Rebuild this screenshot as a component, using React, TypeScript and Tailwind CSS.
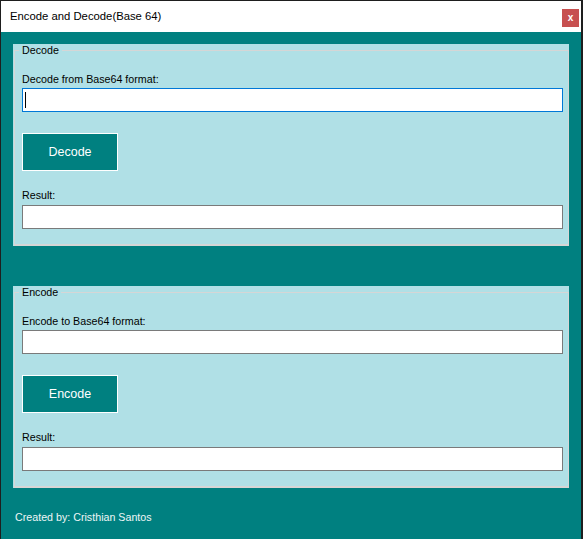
import React from "react";

const font = { fontFamily: '"Liberation Sans", Arial, sans-serif' };

function Field({ focused }: { focused?: boolean }) {
  return (
    <div
      className={
        "h-[24px] w-full bg-white border flex items-center pl-[2px] " +
        (focused ? "border-[#0078d7]" : "border-[#7a7a7a]")
      }
    >
      {focused ? <span className="block w-px h-[16px] bg-black" /> : null}
    </div>
  );
}

function Panel({
  title,
  label,
  button,
  focused,
}: {
  title: string;
  label: string;
  button: string;
  focused?: boolean;
}) {
  return (
    <div className="h-[202px] bg-[#b0e0e6] flex">
      <fieldset className="flex-1 ml-px border border-b-2 border-[#d6d6d6] pl-[7px] pr-[5px] pb-[15px] flex flex-col">
        <legend className="-ml-[3px] px-[3px] text-[10.7px] leading-[13px] text-black">
          {title}
        </legend>
        <div className="mt-[16px] text-[10.7px] leading-[13px] text-black">{label}</div>
        <div className="mt-[2px]">
          <Field focused={focused} />
        </div>
        <div className="mt-[21px] w-[96px] h-[38px] bg-[#008080] border border-white flex items-center justify-center text-white text-[12.5px] pt-px">
          {button}
        </div>
        <div className="mt-[18px] text-[10.7px] leading-[13px] text-black">Result:</div>
        <div className="mt-[3px]">
          <Field />
        </div>
      </fieldset>
    </div>
  );
}

export default function App() {
  return (
    <div
      className="w-[583px] h-[539px] bg-[#1e1e1e] pt-px pl-px pr-[2px] flex flex-col overflow-hidden"
      style={font}
    >
      <div className="h-[31px] bg-white flex justify-between pl-[9px] pr-[2px]">
        <div className="self-center text-[11.3px] text-black">Encode and Decode(Base 64)</div>
        <div className="mt-[8px] w-[17px] h-[18px] bg-[#c75050] flex items-center justify-center text-white text-[10px] font-bold leading-none">
          x
        </div>
      </div>
      <div className="flex-1 bg-[#008080] px-3 pt-3 flex flex-col">
        <Panel title="Decode" label="Decode from Base64 format:" button="Decode" focused />
        <div className="mt-10">
          <Panel title="Encode" label="Encode to Base64 format:" button="Encode" />
        </div>
        <div className="mt-[23px] pl-[2px] text-[10.7px] leading-[13px] text-[#eef6f6]">
          Created by: Cristhian Santos
        </div>
      </div>
    </div>
  );
}
